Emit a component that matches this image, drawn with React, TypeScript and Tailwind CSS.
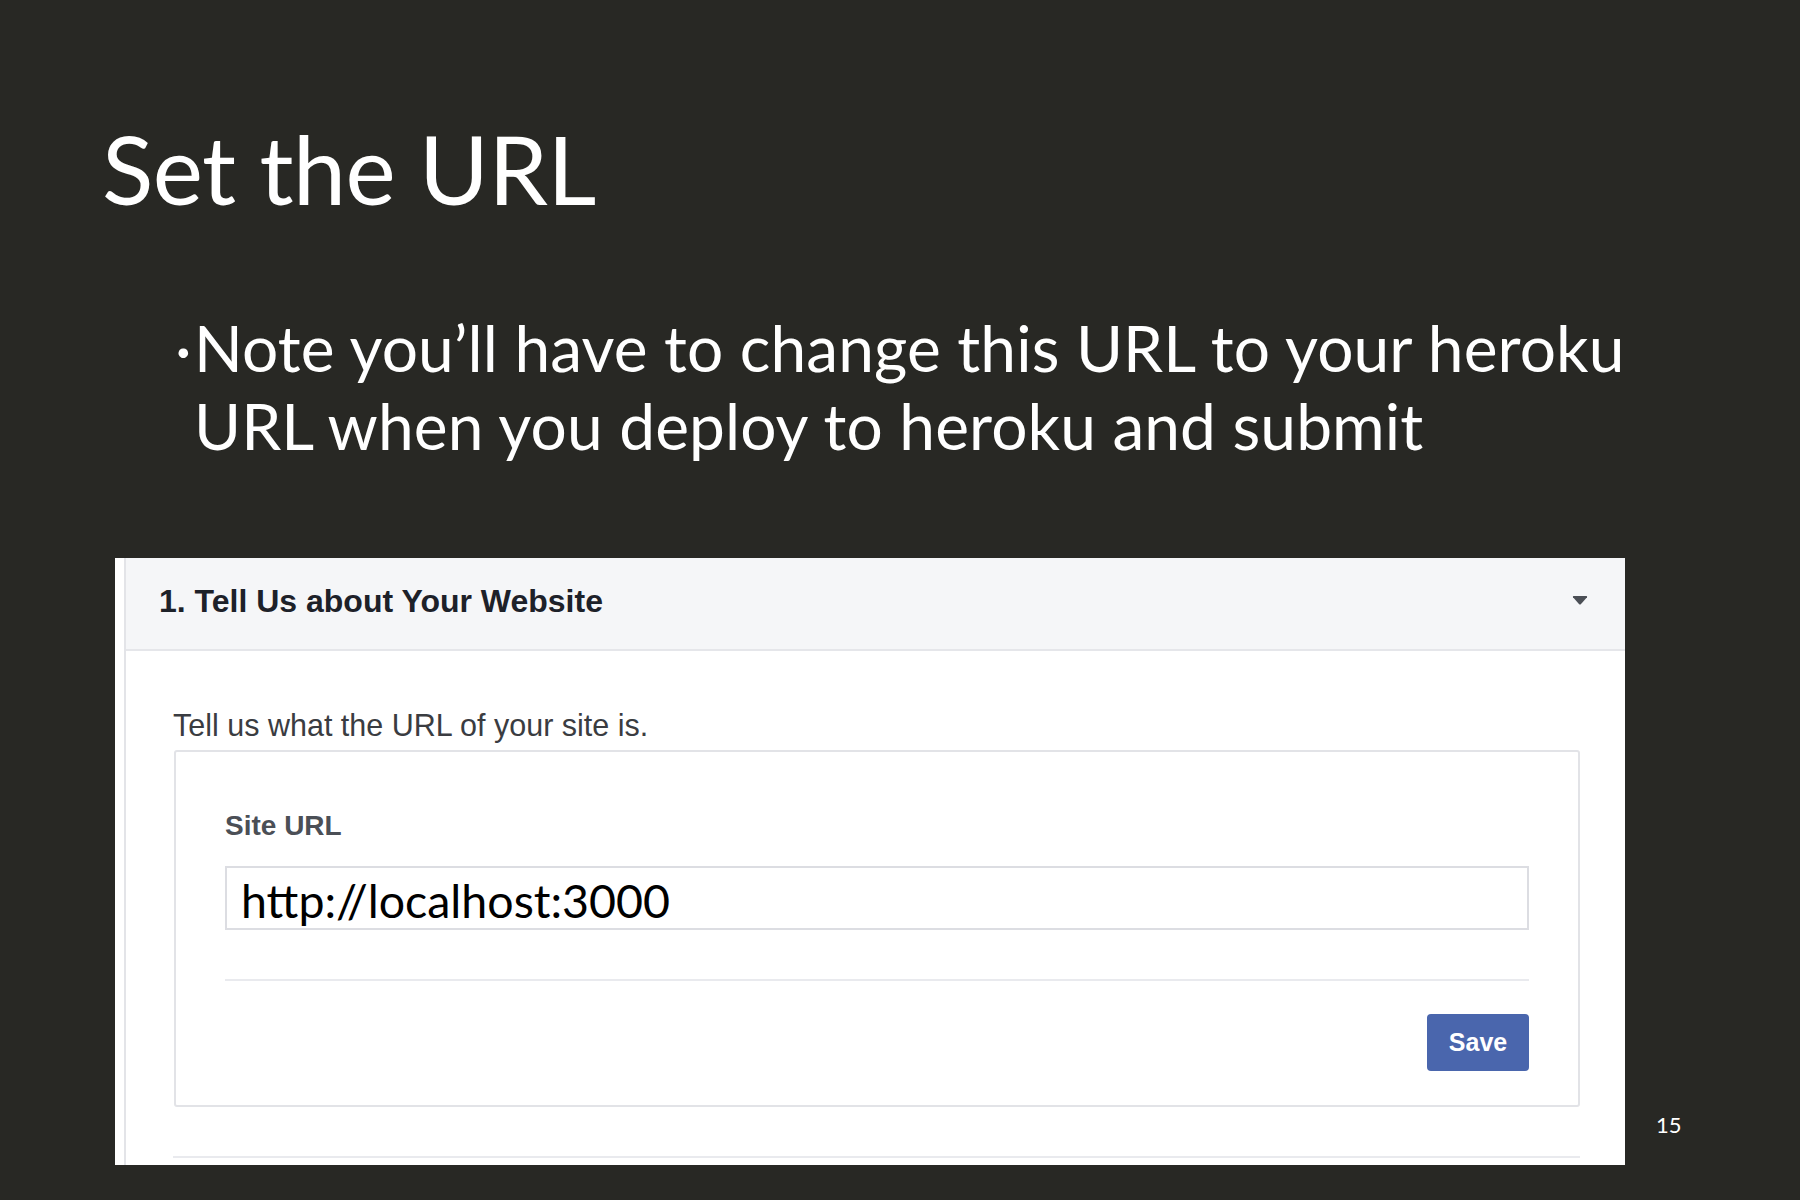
import React from 'react'

const slideFont = { fontFamily: 'Lato, "Open Sans", sans-serif' }
const fbFont = { fontFamily: '"Liberation Sans", Arial, sans-serif' }

function Caret() {
  return (
    <svg width="16" height="9" viewBox="0 0 16 9" className="text-[#4b4f56]">
      <path d="M1 1.2 Q0.4 0 1.8 0 H14.2 Q15.6 0 15 1.2 L8.8 8.2 Q8 9 7.2 8.2 Z" fill="currentColor" />
    </svg>
  )
}

function WebsitePanel() {
  return (
    <div className="flex h-[607px] w-[1510px] bg-white" style={fbFont}>
      <div className="w-[9px] shrink-0 bg-white" />
      <div className="flex min-w-0 flex-1 flex-col border-l-2 border-[#e3e4e8]">
        {/* header */}
        <div className="flex h-[93px] shrink-0 items-center justify-between border-b-2 border-[#e5e6ea] bg-[#f5f6f8] pb-[6px] pl-[33px] pr-[37px]">
          <h2 className="text-[32px] font-bold leading-none text-[#1d2129]">1. Tell Us about Your Website</h2>
          <Caret />
        </div>

        {/* body */}
        <div className="flex flex-1 flex-col pl-[47px] pr-[45px]">
          <p className="mt-[56px] text-[30.5px] leading-[36px] text-[#3a3c41]">Tell us what the URL of your site is.</p>
          <div className="ml-[1px] mt-[7px] flex h-[357px] flex-col rounded-[3px] border-2 border-[#e2e3e7] px-[49px]">
            <label className="mt-[58px] text-[28px] font-bold leading-[32px] text-[#4b4f56]">Site URL</label>
            <div className="mt-[24px] flex h-[64px] items-center border-2 border-[#dcdde2] pl-[14px] pt-[4px]">
              <span className="text-[46.5px] leading-none text-black" style={slideFont}>
                http://localhost:3000
              </span>
            </div>
            <div className="mt-[49px] h-[2px] bg-[#e9eaee]" />
            <div className="mt-[33px] flex justify-end">
              <button className="flex h-[57px] w-[102px] items-center justify-center rounded-[4px] bg-[#4a66ad] text-[25px] font-bold text-white">
                Save
              </button>
            </div>
          </div>
          <div className="mt-[49px] h-[2px] bg-[#e9eaee]" />
        </div>
      </div>
    </div>
  )
}

export default function App() {
  return (
    <div className="h-[1200px] w-[1800px] overflow-hidden bg-[#282824] text-white" style={slideFont}>
      <h1 className="ml-[102px] pt-[121px] text-[95px] font-normal leading-none tracking-[-0.5px]">Set the URL</h1>

      <div className="ml-[175px] mt-[93px] flex text-[64px] leading-[78px]">
        <span className="w-[19px] shrink-0">·</span>
        <p className="w-[1480px] tracking-[0.1px]">
          Note you’ll have to change this URL to your heroku
          <br />
          URL when you deploy to heroku and submit
        </p>
      </div>

      <div className="ml-[115px] mt-[93px] flex items-end">
        <WebsitePanel />
        <span className="mb-[29px] ml-[31px] text-[22px] leading-none">15</span>
      </div>
    </div>
  )
}
